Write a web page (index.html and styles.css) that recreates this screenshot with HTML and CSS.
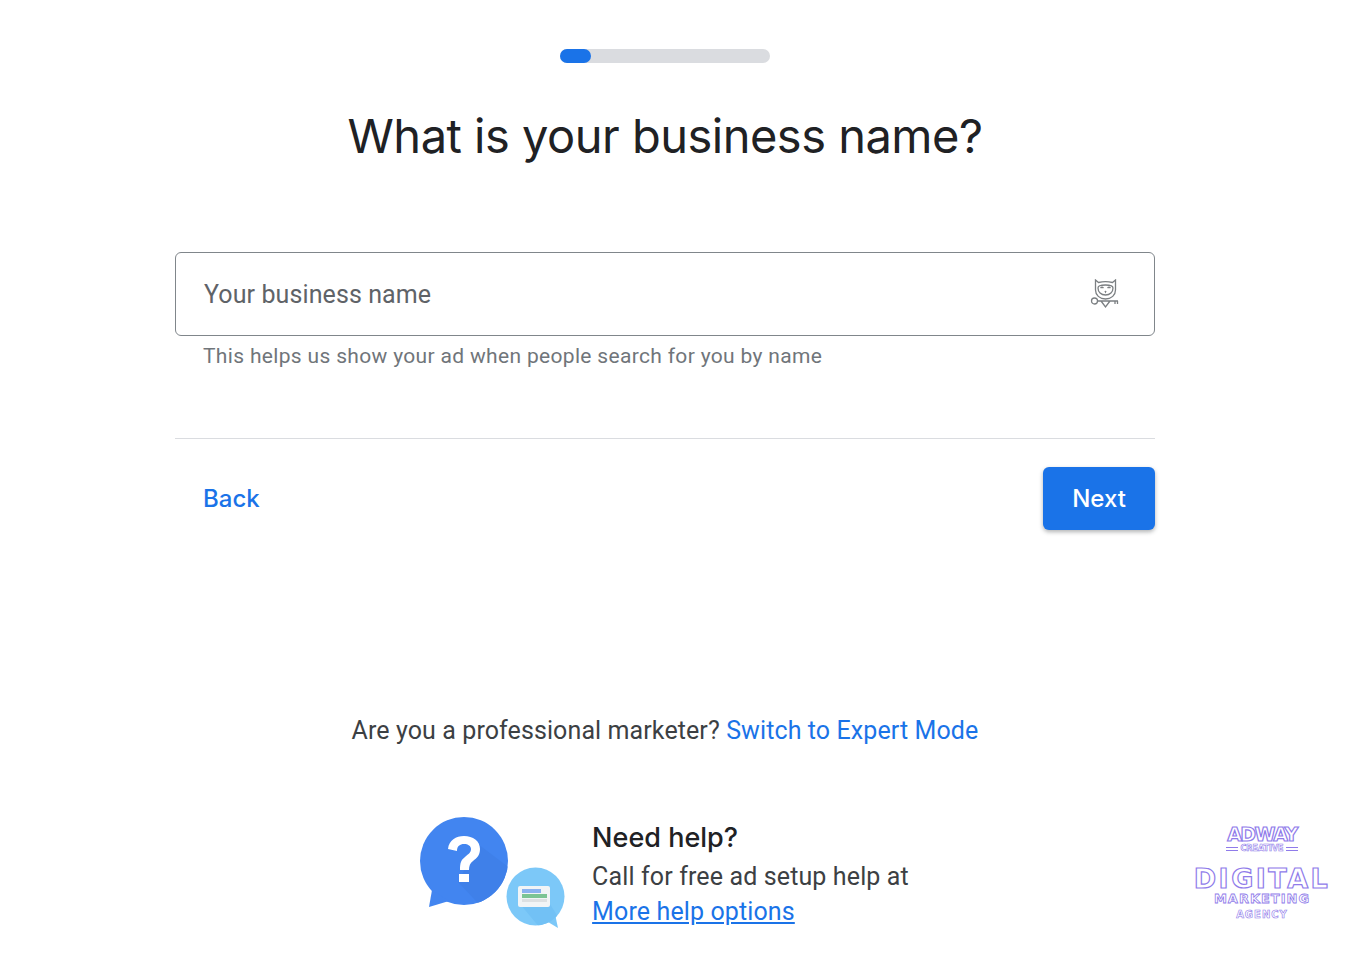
FILE: index.html
```html
<!DOCTYPE html>
<html lang="en">
<head>
    <meta charset="UTF-8">
    <title>Business name</title>
    <link rel="stylesheet" href="styles.css">
</head>
<body>
    <div class="page">
        <div class="progress"><div class="progress-fill"></div></div>
        <h1>What is your business name?</h1>

        <div class="form-area">
            <div class="input-box">
                <span class="placeholder">Your business name</span>
                <svg class="owl" width="30" height="30" viewBox="0 0 30 30" fill="none" stroke="#7b7f82" stroke-width="1.3">
                    <path d="M5.500 1v10c0 5 4 9 10 9s10-4 10-9V1l-3 2.500c-4-1-10-1-14 0z"/>
                    <path d="M8 9c0-2 2-3 7.500-3S23 7 23 9c0 4-3 7-7.500 7S8 13 8 9z"/>
                    <path d="M10.500 9c1-1 2-1 3 0M17.500 9c1-1 2-1 3 0M15 12l.5 1 .5-1"/>
                    <circle cx="4.500" cy="22" r="3"/>
                    <path d="M7.500 22H28M25 22v3M27.500 22v3M11 22l4.500 6 4.500-6"/>
                </svg>
            </div>
            <p class="hint">This helps us show your ad when people search for you by name</p>
            <div class="divider"></div>
            <div class="actions">
                <a class="back" href="#">Back</a>
                <button type="button" class="button">Next</button>
            </div>
        </div>

        <p class="expert">Are you a professional marketer? <a href="#">Switch to Expert Mode</a></p>

        <div class="help">
            <svg class="help-icon" width="150" height="116" viewBox="0 0 150 116">
                <defs>
                    <clipPath id="bigBubble"><circle cx="44" cy="45" r="44"/></clipPath>
                    <clipPath id="smallBubble"><circle cx="115.500" cy="80.500" r="29"/></clipPath>
                </defs>
                <circle cx="44" cy="45" r="44" fill="#4285f0"/>
                <path d="M12 74L9 91l20-6z" fill="#4285f0"/>
                <polygon points="58,28 100,60 70,100 38,66" fill="#3f80e9" clip-path="url(#bigBubble)"/>
                <path d="M28 33c1-9 8-13 16-13 9 0 16 5 16 13 0 6-3 9-7 12-3 2-4 5-4 9h-9c0-7 1-10 5-13 3-3 6-4 6-8 0-3-3-5-7-5s-7 2-7 7z" fill="#fff"/>
                <rect x="39" y="58" width="10" height="8" fill="#fff"/>
                <circle cx="115.500" cy="80.500" r="29" fill="#7cc8f8"/>
                <path d="M128 106l10 6-3-14z" fill="#7cc8f8"/>
                <polygon points="100,88 130,88 145,112 120,112" fill="#72c1f5" clip-path="url(#smallBubble)"/>
                <rect x="98" y="70" width="32" height="21" rx="2" fill="#f1f4f6"/>
                <rect x="102" y="73" width="19" height="4" fill="#8ab2f0"/>
                <rect x="102" y="78" width="25" height="4" fill="#7cc494"/>
                <rect x="102" y="83" width="25" height="3" fill="#dde0e2"/>
            </svg>
            <div class="help-text">
                <h2>Need help?</h2>
                <p>Call for free ad setup help at</p>
                <a href="#">More help options</a>
            </div>
        </div>
    </div>

    <div class="badge">
        <div class="badge-name">ADWAY</div>
        <div class="badge-sub">CREATIVE</div>
        <div class="badge-big">DIGITAL</div>
        <div class="badge-mid">MARKETING</div>
        <div class="badge-small">AGENCY</div>
    </div>
</body>
</html>
```

FILE: styles.css
```css
body {
    margin: 0;
    background-color: #fff;
    color: #3c4043;
    font-family: Roboto, sans-serif;
}

.page {
    width: 1330px;
    display: flex;
    flex-direction: column;
    align-items: center;
    padding-top: 49px;
}

.progress {
    width: 210px;
    height: 14px;
    background-color: #dadce0;
    border-radius: 7px;
}

.progress-fill {
    width: 31px;
    height: 14px;
    background-color: #1a73e8;
    border-radius: 7px;
}

h1 {
    margin: 40px 0 0;
    height: 66px;
    color: #202124;
    font-family: Inter, sans-serif;
    font-size: 47px;
    font-weight: 400;
    line-height: 66px;
    letter-spacing: -0.5px;
}

.form-area {
    width: 980px;
    margin-top: 83px;
}

.input-box {
    height: 82px;
    border: 1px solid #80868b;
    border-radius: 6px;
    display: flex;
    align-items: center;
    justify-content: space-between;
    padding: 0 34px 0 28px;
}

.placeholder {
    color: #5f6368;
    font-size: 25px;
    letter-spacing: 0.1px;
}

.hint {
    margin: 7px 0 0 28px;
    color: #70757a;
    font-size: 21px;
    line-height: 26px;
    letter-spacing: 0.33px;
}

.divider {
    height: 1px;
    background-color: #dadce0;
    margin-top: 69px;
}

.actions {
    display: flex;
    justify-content: space-between;
    align-items: center;
    margin-top: 28px;
    padding-left: 28px;
}

.back {
    color: #1a73e8;
    font-family: Inter, sans-serif;
    font-size: 24px;
    font-weight: 500;
    text-decoration: none;
}

.button {
    width: 112px;
    height: 63px;
    border: none;
    border-radius: 6px;
    background-color: #1a73e8;
    color: #fff;
    font-family: Inter, sans-serif;
    font-size: 24px;
    font-weight: 500;
    box-shadow: 0 2px 4px rgba(60, 64, 67, 0.4);
}

.expert {
    margin: 185px 0 0;
    color: #3c4043;
    font-size: 25px;
    line-height: 32px;
    letter-spacing: 0.1px;
}

.expert a {
    color: #1a73e8;
    text-decoration: none;
}

.help {
    display: flex;
    align-items: center;
    gap: 22px;
    margin-top: 69px;
    margin-left: -1px;
}

.help-text h2 {
    margin: 0;
    color: #202124;
    font-family: Inter, sans-serif;
    font-size: 27px;
    font-weight: 500;
    line-height: 36px;
}

.help-text p {
    margin: 3px 0 0;
    color: #3c4043;
    font-size: 25px;
    line-height: 35px;
    letter-spacing: 0.13px;
}

.help-text a {
    color: #1a73e8;
    font-size: 25px;
    line-height: 35px;
    letter-spacing: 0.12px;
}

.badge {
    position: absolute;
    left: 1180px;
    top: 824px;
    width: 164px;
    text-align: center;
    font-family: "DejaVu Sans", sans-serif;
    font-weight: 700;
    color: #fff;
    -webkit-text-stroke: 1.2px #8f7bea;
}

.badge-name {
    font-size: 19px;
    line-height: 20px;
    letter-spacing: -1.5px;
}

.badge-sub {
    display: flex;
    justify-content: center;
    align-items: center;
    gap: 2px;
    font-size: 8px;
    line-height: 9px;
    -webkit-text-stroke: 0.6px #8f7bea;
}

.badge-sub::before,
.badge-sub::after {
    content: "";
    width: 12px;
    height: 2px;
    border-top: 1px solid #8f7bea;
    border-bottom: 1px solid #8f7bea;
}

.badge-big {
    margin-top: 14px;
    font-size: 27px;
    line-height: 24px;
    letter-spacing: 2.5px;
}

.badge-mid {
    font-size: 13px;
    line-height: 16px;
    letter-spacing: 1px;
    -webkit-text-stroke: 0.8px #8f7bea;
}

.badge-small {
    margin-top: 1px;
    font-size: 10px;
    line-height: 13px;
    letter-spacing: 1px;
    -webkit-text-stroke: 0.6px #8f7bea;
}
```
